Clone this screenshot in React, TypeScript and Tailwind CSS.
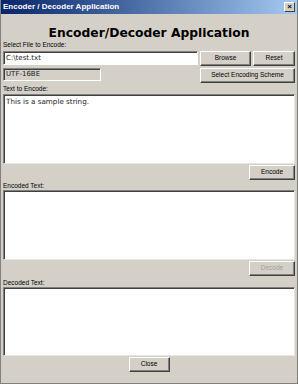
import type { ReactNode } from "react";

const ui = "font-['Liberation_Sans',Arial,sans-serif]";

function Btn({ children, w, disabled = false }: { children: ReactNode; w: string; disabled?: boolean }) {
  return (
    <button
      className={`${w} h-[15px] shrink-0 bg-[#d4d0c8] border border-t-white border-l-white border-b-[#404040] border-r-[#404040] shadow-[inset_-1px_-1px_#808080] text-[6.5px] leading-none ${
        disabled ? "text-[#a0a0a0]" : "text-black"
      }`}
    >
      {children}
    </button>
  );
}

function Label({ children }: { children: ReactNode }) {
  return <div className="h-[8px] text-[6.5px] leading-[8px] text-black">{children}</div>;
}

function Area({ h, children }: { h: string; children?: ReactNode }) {
  return (
    <div
      className={`${h} bg-white border border-t-[#808080] border-l-[#808080] border-b-[#e8e6e0] border-r-[#e8e6e0] shadow-[inset_1px_1px_#404040] px-[2px] pt-[2px] text-[7.2px] leading-[9px] font-['DejaVu_Sans',sans-serif] text-[#222]`}
    >
      {children}
    </div>
  );
}

export default function App() {
  return (
    <div className={`w-[298px] h-[384px] bg-[#d4d0c8] border border-[#808080] border-t-0 flex flex-col ${ui}`}>
      <div className="h-[14px] bg-gradient-to-r from-[#0a246a] to-[#a6caf0] flex items-center justify-between pl-[2px] pr-[2px]">
        <span className="text-white font-bold text-[8px] leading-none">Encoder / Decoder Application</span>
        <span className="w-[11px] h-[10px] bg-[#d4d0c8] border border-t-white border-l-white border-b-[#404040] border-r-[#404040] flex items-center justify-center text-[8px] font-bold leading-none text-black">
          ×
        </span>
      </div>

      <div className="h-[25px] flex items-end justify-center">
        <h1 className="font-['DejaVu_Sans',Verdana,sans-serif] font-bold text-[12.3px] leading-none text-black">
          Encoder/Decoder Application
        </h1>
      </div>

      <div className="px-[2px] pt-[2px] flex flex-col">
        <Label>Select File to Encode:</Label>
        <div className="mt-[2px] flex items-start gap-[2px]">
          <div className="w-[198px] h-[14px] bg-white border border-t-[#808080] border-l-[#808080] border-b-white border-r-white shadow-[inset_1px_1px_#404040] pl-[2px] text-[7px] leading-[12px] font-['DejaVu_Sans',sans-serif] text-[#222]">
            C:\test.txt
          </div>
          <Btn w="w-[51px]">Browse</Btn>
          <Btn w="w-[42px]">Reset</Btn>
        </div>
        <div className="mt-[2px] flex items-start justify-between">
          <div className="w-[98px] h-[13px] bg-[#d4d0c8] border border-t-[#808080] border-l-[#808080] border-b-white border-r-white shadow-[inset_1px_1px_#404040] pl-[2px] text-[7px] leading-[11px] font-['DejaVu_Sans',sans-serif] text-[#222]">
            UTF-16BE
          </div>
          <Btn w="w-[95px]">Select Encoding Scheme</Btn>
        </div>

        <div className="mt-[2px]">
          <Label>Text to Encode:</Label>
        </div>
        <div className="mt-[1px]">
          <Area h="h-[70px]">This is a sample string.</Area>
        </div>
        <div className="mt-[1px] flex justify-end">
          <Btn w="w-[46px]">Encode</Btn>
        </div>

        <div className="mt-[2px]">
          <Label>Encoded Text:</Label>
        </div>
        <Area h="h-[70px]" />
        <div className="mt-[1px] flex justify-end">
          <Btn w="w-[46px]" disabled>
            Decode
          </Btn>
        </div>

        <div className="mt-[3px]">
          <Label>Decoded Text:</Label>
        </div>
        <Area h="h-[69px]" />
        <div className="mt-[1px] flex justify-center">
          <Btn w="w-[41px]">Close</Btn>
        </div>
      </div>
    </div>
  );
}
